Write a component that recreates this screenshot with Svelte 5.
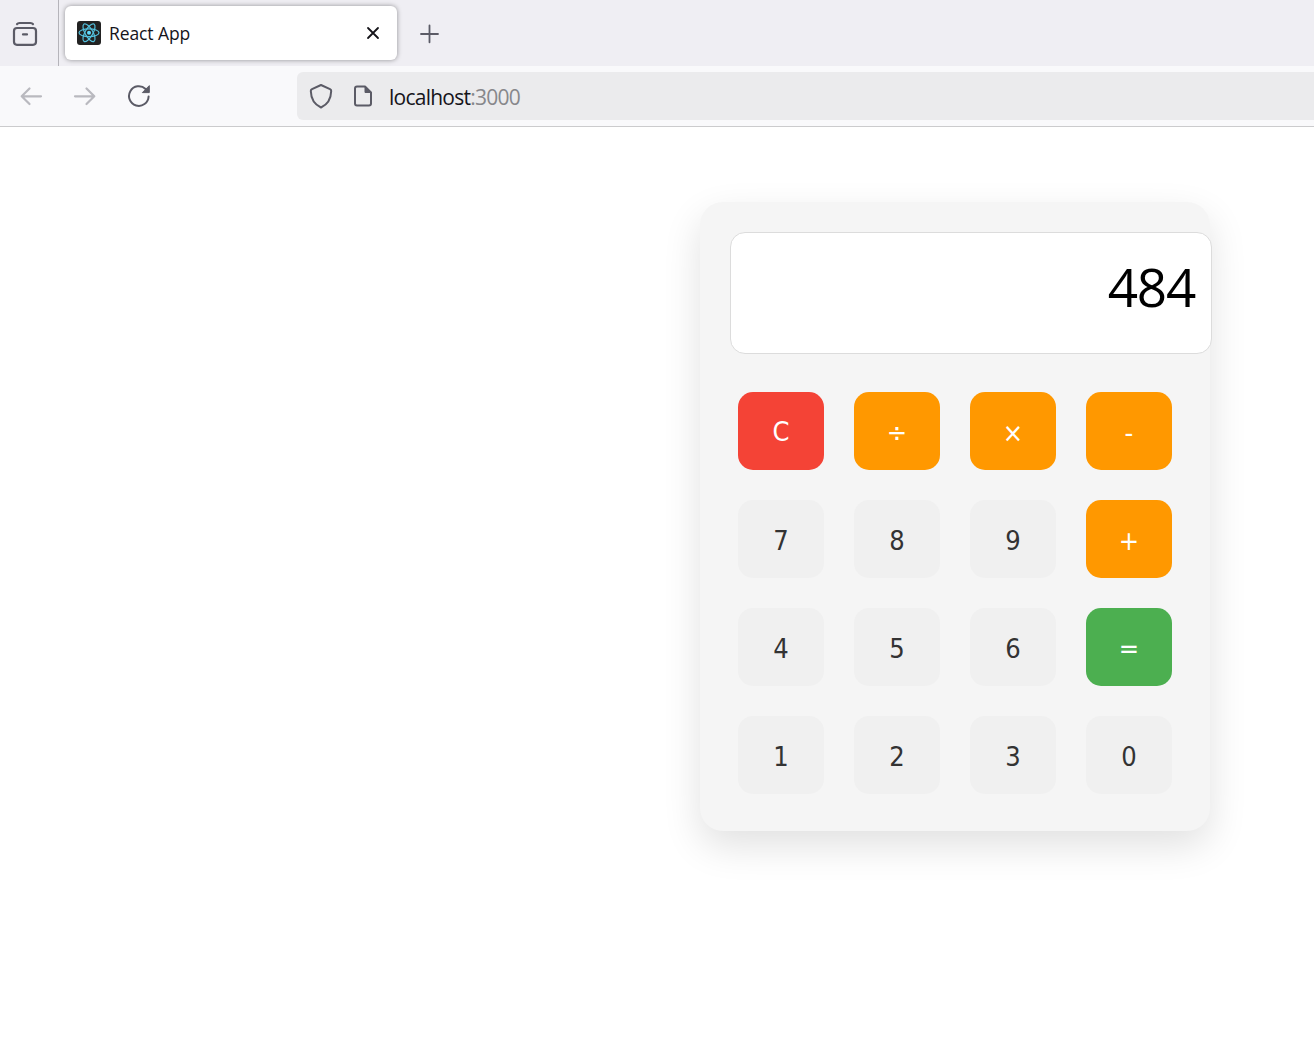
<script>
  const keys = [
    { label: 'C', kind: 'clear' },
    { label: '÷', kind: 'operator' },
    { label: '×', kind: 'operator' },
    { label: '-', kind: 'operator' },
    { label: '7', kind: 'digit' },
    { label: '8', kind: 'digit' },
    { label: '9', kind: 'digit' },
    { label: '+', kind: 'operator' },
    { label: '4', kind: 'digit' },
    { label: '5', kind: 'digit' },
    { label: '6', kind: 'digit' },
    { label: '=', kind: 'equals' },
    { label: '1', kind: 'digit' },
    { label: '2', kind: 'digit' },
    { label: '3', kind: 'digit' },
    { label: '0', kind: 'digit' }
  ];
  let value = $state('484');
</script>

<div class="browser">
  <header class="tabs">
    <div class="history">
      <svg width="26" height="26" viewBox="0 0 26 26" fill="none" stroke="#5b5b66" stroke-width="2.200" stroke-linecap="round">
        <path d="M5 3.200Q5.800 2 7.500 2H18.500Q20.200 2 21 3.200" />
        <rect x="2" y="7" width="22" height="16.800" rx="3" />
        <path d="M11 13.400H15" />
      </svg>
    </div>
    <div class="tab">
      <svg class="favicon" width="24" height="24" viewBox="0 0 24 24" fill="none" stroke="#53c1de" stroke-width="1.200">
        <rect width="24" height="24" rx="3" fill="#222" stroke="none" />
        <ellipse cx="12" cy="11.700" rx="10" ry="3.900" />
        <ellipse cx="12" cy="11.700" rx="10" ry="3.900" transform="rotate(60 12 11.700)" />
        <ellipse cx="12" cy="11.700" rx="10" ry="3.900" transform="rotate(120 12 11.700)" />
        <circle cx="12" cy="11.700" r="2" fill="#61dafb" stroke="none" />
      </svg>
      <span class="title">React App</span>
      <svg class="close" width="14" height="14" viewBox="0 0 14 14" stroke="#15141a" stroke-width="1.800" stroke-linecap="round">
        <path d="M2 2L12 12M12 2L2 12" />
      </svg>
    </div>
    <svg class="plus" width="20" height="20" viewBox="0 0 20 20" stroke="#5b5b66" stroke-width="1.800" stroke-linecap="round">
      <path d="M9.500 1.500V18.300M1 10H18" />
    </svg>
  </header>

  <nav class="toolbar">
    <svg class="back" width="24" height="22" viewBox="0 0 24 22" fill="none" stroke="#b9b9bf" stroke-width="2.200" stroke-linecap="round" stroke-linejoin="round">
      <path d="M10.500 3.500L2.700 11.300L10.500 19M2.700 11.300H22" />
    </svg>
    <svg class="forward" width="24" height="22" viewBox="0 0 24 22" fill="none" stroke="#b9b9bf" stroke-width="2.200" stroke-linecap="round" stroke-linejoin="round">
      <path d="M13.500 3.500L21.300 11.300L13.500 19M21.300 11.300H2" />
    </svg>
    <svg class="reload" width="24" height="24" viewBox="0 0 24 24" fill="none" stroke="#5b5b66" stroke-width="2" stroke-linecap="round">
      <path d="M21.600 12.500A9.800 9.800 0 1 1 18.600 5" />
      <path d="M22.300 2V8.600H15.700Z" fill="#5b5b66" stroke-width="1" stroke-linejoin="round" />
    </svg>
    <div class="address">
      <svg class="shield" width="24" height="26" viewBox="0 0 24 26" fill="none" stroke="#5b5b66" stroke-width="2" stroke-linejoin="round">
        <path d="M12 2L21 6.200Q22.200 6.800 22.200 8C22 15.500 18.500 21.500 12 24.500C5.500 21.500 2 15.500 1.800 8Q1.800 6.800 3 6.200Z" />
      </svg>
      <svg class="page" width="20" height="24" viewBox="0 0 20 24" fill="none" stroke="#5b5b66" stroke-width="2" stroke-linejoin="round">
        <path d="M12 2.500H4Q2 2.500 2 4.500V19.500Q2 21.500 4 21.500H16Q18 21.500 18 19.500V8.500Z" />
        <path d="M12 2.500V8.500H18Z" fill="#5b5b66" stroke-width="1" />
      </svg>
      <span class="url">localhost<span class="port">:3000</span></span>
    </div>
  </nav>

  <main>
    <section class="calculator">
      <div class="display">{value}</div>
      <div class="keys">
        {#each keys as key}
          <button class={key.kind}>{key.label}</button>
        {/each}
      </div>
    </section>
  </main>
</div>

<style>
  :global(body) {
    margin: 0;
    background: #fff;
  }

  .browser {
    height: 1060px;
    overflow: hidden;
    font-family: "Open Sans", "Noto Sans", sans-serif;
  }

  svg {
    display: block;
    flex: none;
  }

  .tabs {
    box-sizing: border-box;
    height: 66px;
    display: flex;
    background: #efeef3;
  }

  .history {
    box-sizing: border-box;
    width: 59px;
    padding: 21px 0 0 12px;
    border-right: 1px solid #b5b4ba;
  }

  .tab {
    box-sizing: border-box;
    display: flex;
    align-items: center;
    width: 332px;
    height: 54px;
    margin: 6px 0 0 6px;
    padding: 0 17px 0 12px;
    border-radius: 6px;
    background: #fff;
    box-shadow: 0 0 5px rgba(0, 0, 0, 0.4);
  }

  .title {
    flex: 1;
    margin-left: 8px;
    font-size: 17.500px;
    letter-spacing: -0.100px;
    color: #15141a;
  }

  .plus {
    margin: 24px 0 0 23px;
  }

  .toolbar {
    box-sizing: border-box;
    height: 61px;
    display: flex;
    align-items: center;
    padding-left: 19px;
    border-bottom: 1px solid #cbcbcd;
    background: #f9f9fb;
  }

  .forward {
    margin-left: 30px;
  }

  .reload {
    margin-left: 30px;
  }

  .address {
    flex: 1;
    height: 48px;
    display: flex;
    align-items: center;
    margin-left: 146px;
    padding-left: 12px;
    border-radius: 6px 0 0 6px;
    background: #ebebed;
  }

  .page {
    margin-left: 20px;
  }

  .url {
    margin: 2px 0 0 16px;
    font-size: 21px;
    letter-spacing: -0.750px;
    color: #15141a;
  }

  .port {
    color: #87878b;
  }

  main {
    display: flex;
    padding: 75px 0 0 700px;
  }

  .calculator {
    box-sizing: border-box;
    width: 510px;
    height: 629px;
    padding: 30px;
    border-radius: 23px;
    background: #f5f5f5;
    box-shadow: 0 15px 38px rgba(0, 0, 0, 0.12);
  }

  .display {
    box-sizing: border-box;
    width: 482px;
    height: 122px;
    padding: 16px 16px 0;
    border: 1px solid #dcdcdc;
    border-radius: 15px;
    background: #fff;
    color: #000;
    font-size: 53px;
    line-height: 75px;
    letter-spacing: -1.200px;
    text-align: right;
  }

  .keys {
    display: grid;
    grid-template-columns: repeat(4, 86px);
    grid-auto-rows: 78px;
    gap: 30px;
    margin: 38px 0 0 8px;
  }

  button {
    margin: 0;
    padding: 2px 0 0;
    border: 0;
    border-radius: 15px;
    font-family: "DejaVu Sans Condensed", "DejaVu Sans", sans-serif;
    font-stretch: condensed;
    font-size: 27px;
    color: #fff;
  }

  .digit {
    background: #f0f0f0;
    color: #333;
  }

  .clear {
    padding-top: 0;
    background: #f44336;
  }

  .operator {
    background: #ff9800;
  }

  .equals {
    background: #4caf50;
  }
</style>
